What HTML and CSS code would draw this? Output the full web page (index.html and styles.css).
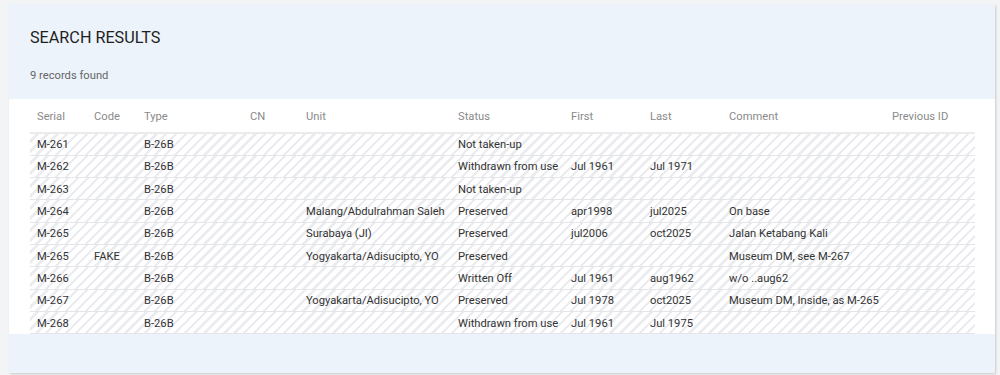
FILE: index.html
```html
<!DOCTYPE html>
<html>
<head>
<meta charset="utf-8">
<link rel="stylesheet" href="styles.css">
</head>
<body>
<div class="panel">
  <div class="panel-head">
    <h1 class="title">SEARCH RESULTS</h1>
    <p class="count">9 records found</p>
  </div>
  <div class="panel-body">
    <table class="results">
      <colgroup>
        <col class="c-serial"><col class="c-code"><col class="c-type"><col class="c-cn"><col class="c-unit">
        <col class="c-status"><col class="c-first"><col class="c-last"><col class="c-comment"><col class="c-prev">
      </colgroup>
      <thead>
        <tr><th>Serial</th><th>Code</th><th>Type</th><th>CN</th><th>Unit</th><th>Status</th><th>First</th><th>Last</th><th>Comment</th><th>Previous ID</th></tr>
      </thead>
      <tbody>
        <tr><td>M-261</td><td></td><td>B-26B</td><td></td><td></td><td>Not taken-up</td><td></td><td></td><td></td><td></td></tr>
        <tr><td>M-262</td><td></td><td>B-26B</td><td></td><td></td><td>Withdrawn from use</td><td>Jul 1961</td><td>Jul 1971</td><td></td><td></td></tr>
        <tr><td>M-263</td><td></td><td>B-26B</td><td></td><td></td><td>Not taken-up</td><td></td><td></td><td></td><td></td></tr>
        <tr><td>M-264</td><td></td><td>B-26B</td><td></td><td>Malang/Abdulrahman Saleh</td><td>Preserved</td><td>apr1998</td><td>jul2025</td><td>On base</td><td></td></tr>
        <tr><td>M-265</td><td></td><td>B-26B</td><td></td><td>Surabaya (JI)</td><td>Preserved</td><td>jul2006</td><td>oct2025</td><td>Jalan Ketabang Kali</td><td></td></tr>
        <tr><td>M-265</td><td>FAKE</td><td>B-26B</td><td></td><td>Yogyakarta/Adisucipto, YO</td><td>Preserved</td><td></td><td></td><td>Museum DM, see M-267</td><td></td></tr>
        <tr><td>M-266</td><td></td><td>B-26B</td><td></td><td></td><td>Written Off</td><td>Jul 1961</td><td>aug1962</td><td>w/o ..aug62</td><td></td></tr>
        <tr><td>M-267</td><td></td><td>B-26B</td><td></td><td>Yogyakarta/Adisucipto, YO</td><td>Preserved</td><td>Jul 1978</td><td>oct2025</td><td>Museum DM, Inside, as M-265</td><td></td></tr>
        <tr><td>M-268</td><td></td><td>B-26B</td><td></td><td></td><td>Withdrawn from use</td><td>Jul 1961</td><td>Jul 1975</td><td></td><td></td></tr>
      </tbody>
    </table>
  </div>
  <div class="panel-foot"></div>
</div>
</body>
</html>
```

FILE: styles.css
```css
html, body {
  margin: 0;
  padding: 0;
}
body {
  background: #f3f4f5;
  font-family: Roboto, "Liberation Sans", Arial, sans-serif;
  padding: 5px 5px 2px 9px;
  height: 375px;
  box-sizing: border-box;
  overflow: hidden;
}
.panel {
  width: 986px;
  height: 368px;
  background: #edf3fa;
  box-shadow: 1px 1px 2px rgba(0, 0, 0, 0.18);
  display: flex;
  flex-direction: column;
}
.panel-head {
  height: 94px;
  box-sizing: border-box;
  padding: 23px 21px 0;
}
.title {
  margin: 0;
  font-size: 16.2px;
  font-weight: 400;
  color: #1f1f1f;
  line-height: 19px;
}
.count {
  margin: 22px 0 0;
  font-size: 11.2px;
  color: #666;
  line-height: 14px;
}
.panel-body {
  background: #fff;
  padding: 0 20px 0 21px;
}
.panel-foot {
  flex: 1;
}
.results {
  width: 945px;
  table-layout: fixed;
  border-collapse: collapse;
  font-size: 11.2px;
}
.c-serial { width: 57px; }
.c-code { width: 50px; }
.c-type { width: 106px; }
.c-cn { width: 56px; }
.c-unit { width: 152px; }
.c-status { width: 113px; }
.c-first { width: 79px; }
.c-last { width: 79px; }
.c-comment { width: 163px; }
.c-prev { width: 90px; }
.results th {
  text-align: left;
  font-weight: 400;
  color: #8a8a8a;
  height: 34px;
  padding: 1px 7px 0;
  border-bottom: 2px solid #e9ebed;
  box-sizing: border-box;
  white-space: nowrap;
}
.results tbody tr {
  background: repeating-linear-gradient(-45deg, #ffffff 0, #ffffff 4.5px, #eaecef 4.5px, #eaecef 7px);
}
.results td {
  height: 22.3px;
  padding: 1px 7px 0;
  color: #333;
  border-bottom: 1.5px solid #e3e5e8;
  box-sizing: border-box;
  white-space: nowrap;
}
```
